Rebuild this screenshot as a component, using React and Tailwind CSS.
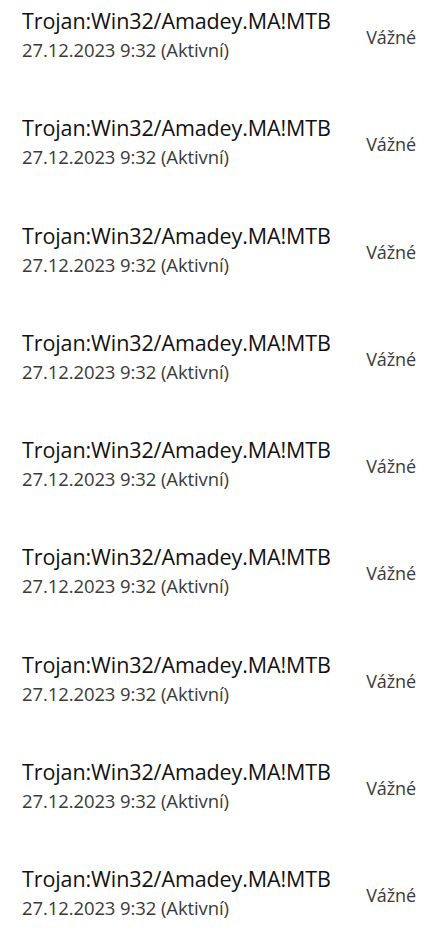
export default function App() {
  const rows = Array.from({ length: 9 });
  return (
    <div className="w-[447px] h-[930px] overflow-hidden bg-white" style={{ fontFamily: '"Open Sans", "Noto Sans", sans-serif' }}>
      {rows.map((_, i) => (
        <div key={i} className="h-[107.25px] flex items-start pl-[22px] pr-[31px]">
          <div className="flex-1 pt-[6px]">
            <div className="text-[21.5px] leading-[30px] text-[#111] tracking-[-0.1px]">Trojan:Win32/Amadey.MA!MTB</div>
            <div className="text-[18.5px] leading-[26px] mt-[1px] text-[#3a3a3a] tracking-[-0.1px]">27.12.2023 9:32 (Aktivní)</div>
          </div>
          <div className="pt-[24px] text-[18px] leading-[26px] text-[#3a3a3a] tracking-[-0.1px]">Vážné</div>
        </div>
      ))}
    </div>
  );
}
